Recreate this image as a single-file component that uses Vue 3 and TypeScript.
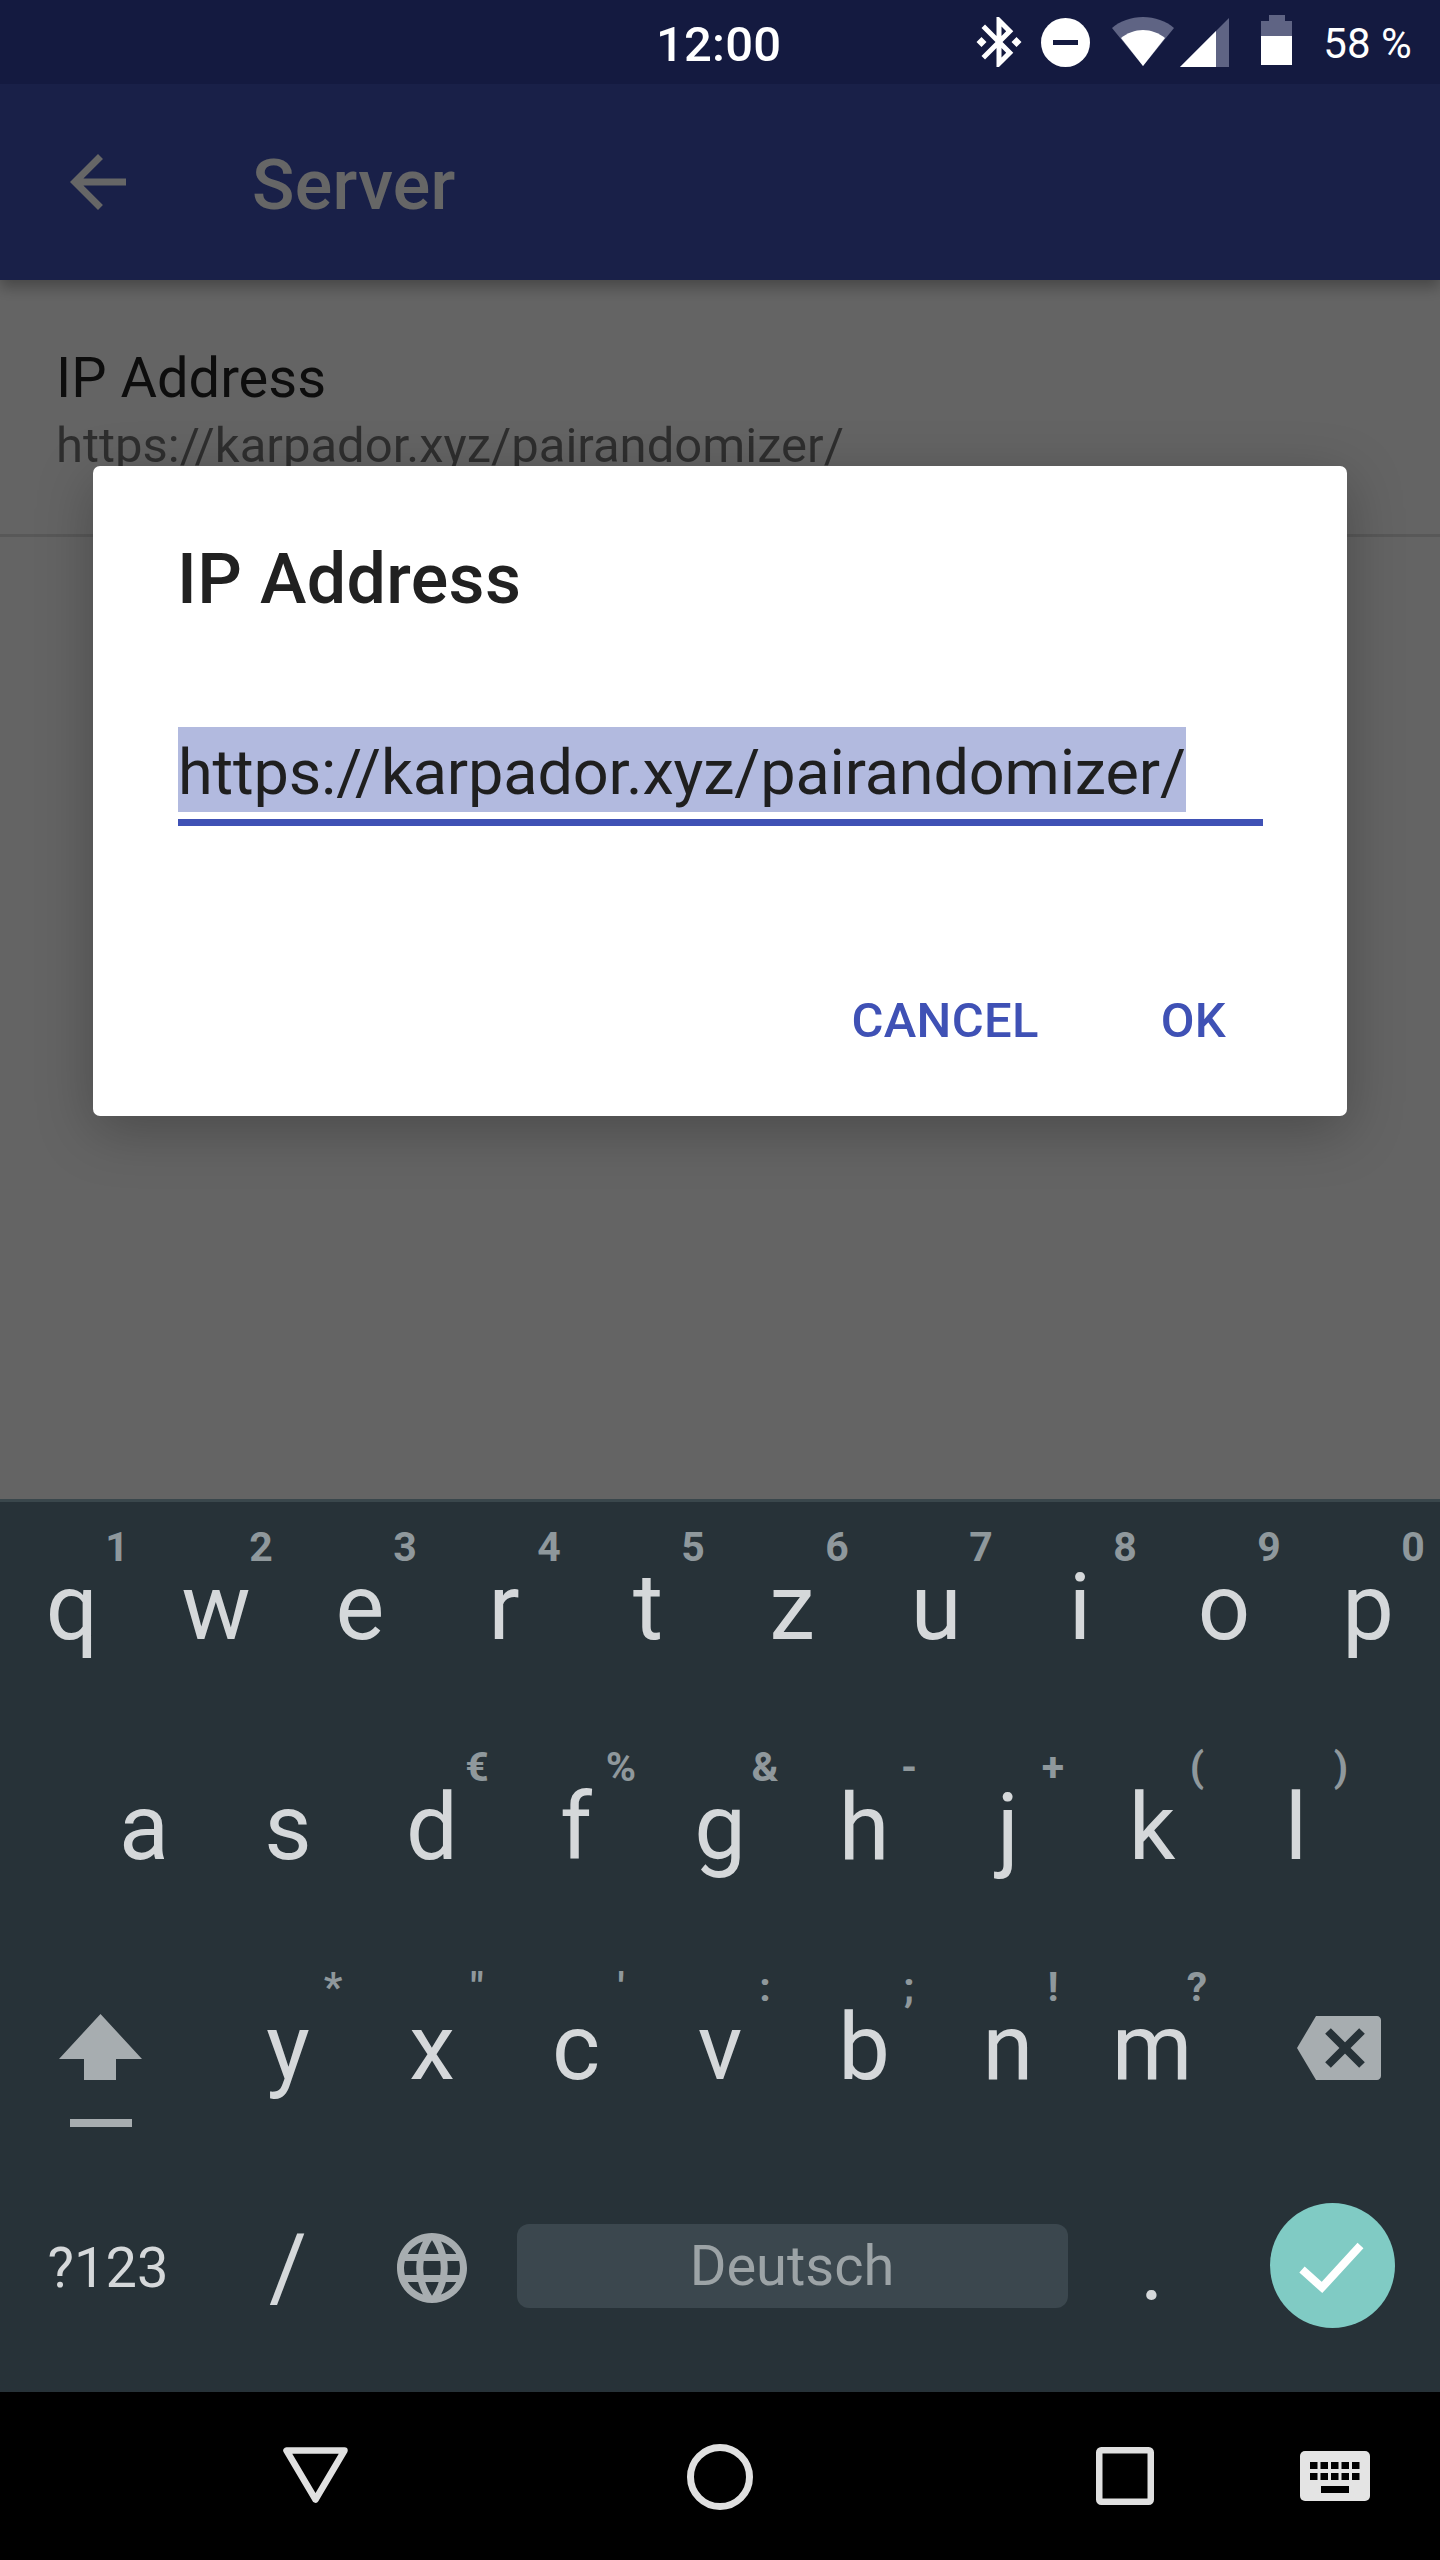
<script setup lang="ts">
interface Key {
  label: string
  hint?: string
}

const toKeys = (labels: string, hints: string): Key[] =>
  labels.split('').map((label, i) => ({ label, hint: hints[i]?.trim() }))

const rowOne = toKeys('qwertzuiop', '1234567890')
const rowTwo = toKeys('asdfghjkl', '  €%&-+()')
const rowThree = toKeys('yxcvbnm', '*"\':;!?')

const keyboardKeys = [0, 1, 2, 3, 4].flatMap((col) => [0, 1].map((row) => ({ col, row })))
</script>

<template>
  <div class="phone">
    <header class="status-bar">
      <span class="clock">12:00</span>
      <div class="status-icons">
        <svg class="ic-bluetooth" viewBox="0 0 24 24" width="60" height="60" fill="#fff">
          <path d="M7 12l-2-2-2 2 2 2 2-2zm10.71-4.29L12 2h-1v7.59L6.41 5 5 6.41 10.59 12 5 17.59 6.41 19 11 14.41V22h1l5.71-5.71-4.3-4.29 4.3-4.29zM13 5.83l1.88 1.88L13 9.59V5.83zm1.88 10.46L13 18.17v-3.76l1.88 1.88zM19 10l-2 2 2 2 2-2-2-2z" />
        </svg>
        <svg class="ic-dnd" viewBox="0 0 49 49" width="49" height="49">
          <circle cx="24.5" cy="24.5" r="24.5" fill="#fff" />
          <rect x="12" y="22" width="25" height="5" fill="#141a40" />
        </svg>
        <svg class="ic-wifi" viewBox="0 0 62 50" width="62" height="50">
          <path d="M0 11C8 4 19 0 31 0s23 4 31 11L31 49z" fill="#5f6484" />
          <path d="M9 21c6-5 14-8 22-8s16 3 22 8L31 49z" fill="#fff" />
        </svg>
        <svg class="ic-signal" viewBox="0 0 49 49" width="49" height="49">
          <path d="M0 49L49 0v49z" fill="#5f6484" />
          <path d="M0 49l36-36v36z" fill="#fff" />
        </svg>
        <svg class="ic-battery" viewBox="0 0 31 50" width="31" height="50">
          <path d="M8 0h16v6h7v15H0V6h8z" fill="#5f6484" />
          <rect y="21" width="31" height="29" fill="#fff" />
        </svg>
        <span class="battery-text">58 %</span>
      </div>
    </header>

    <main class="screen">
      <div class="app-bar">
        <svg class="back" viewBox="0 0 24 24" width="84" height="84" fill="#fff">
          <path d="M20 11H7.83l5.59-5.59L12 4l-8 8 8 8 1.41-1.41L7.83 13H20v-2z" />
        </svg>
        <h1 class="app-title">Server</h1>
      </div>
      <div class="pref-row">
        <div class="pref-title">IP Address</div>
        <div class="pref-summary">https://karpador.xyz/pairandomizer/</div>
      </div>

      <div class="scrim">
        <section class="dialog">
          <h2 class="dialog-title">IP Address</h2>
          <div class="field">
            <span class="selected">https://karpador.xyz/pairandomizer/</span>
          </div>
          <div class="actions">
            <button class="action">CANCEL</button>
            <button class="action">OK</button>
          </div>
        </section>
      </div>
    </main>

    <section class="keyboard">
      <div class="kb-row">
        <div v-for="k in rowOne" :key="k.label" class="key">
          {{ k.label }}<span class="hint">{{ k.hint }}</span>
        </div>
      </div>
      <div class="kb-row kb-row-inset">
        <div v-for="k in rowTwo" :key="k.label" class="key">
          {{ k.label }}<span v-if="k.hint" class="hint">{{ k.hint }}</span>
        </div>
      </div>
      <div class="kb-row">
        <div class="key key-wide key-shift">
          <svg viewBox="0 0 83 114" width="83" height="114" fill="#a7adb0">
            <path d="M41.5 0L83 45H57v21H25V45H0z" />
            <rect x="11" y="105" width="62" height="8" />
          </svg>
        </div>
        <div v-for="k in rowThree" :key="k.label" class="key">
          {{ k.label }}<span class="hint">{{ k.hint }}</span>
        </div>
        <div class="key key-wide key-delete">
          <svg viewBox="0 0 84 64" width="84" height="64">
            <path d="M19 0h61c2 0 4 2 4 4v56c0 2-2 4-4 4H19L0 32z" fill="#a7adb0" />
            <path d="M31 15l34 34M65 15L31 49" stroke="#273238" stroke-width="8" fill="none" />
          </svg>
        </div>
      </div>
      <div class="kb-row">
        <div class="key key-wide key-small">?123</div>
        <div class="key">/</div>
        <div class="key">
          <svg viewBox="0 0 24 24" width="84" height="84" fill="#a7adb0">
            <path d="M11.99 2C6.47 2 2 6.48 2 12s4.47 10 9.99 10C17.52 22 22 17.52 22 12S17.52 2 11.99 2zm6.93 6h-2.95c-.32-1.25-.78-2.45-1.38-3.56 1.84.63 3.37 1.91 4.33 3.56zM12 4.04c.83 1.2 1.48 2.53 1.91 3.96h-3.82c.43-1.43 1.08-2.76 1.91-3.96zM4.26 14C4.1 13.36 4 12.69 4 12s.1-1.36.26-2h3.38c-.08.66-.14 1.32-.14 2 0 .68.06 1.34.14 2H4.26zm.82 2h2.95c.32 1.25.78 2.45 1.38 3.56-1.84-.63-3.37-1.9-4.33-3.56zm2.95-8H5.08c.96-1.66 2.49-2.93 4.33-3.56C8.81 5.55 8.35 6.75 8.03 8zM12 19.96c-.83-1.2-1.48-2.53-1.91-3.96h3.82c-.43 1.43-1.08 2.76-1.91 3.96zM14.34 14H9.66c-.09-.66-.16-1.32-.16-2 0-.68.07-1.35.16-2h4.68c.09.65.16 1.32.16 2 0 .68-.07 1.34-.16 2zm.25 5.56c.6-1.11 1.06-2.31 1.38-3.56h2.95c-.96 1.65-2.49 2.93-4.33 3.56zM16.36 14c.08-.66.14-1.32.14-2 0-.68-.06-1.34-.14-2h3.38c.16.64.26 1.31.26 2s-.1 1.36-.26 2h-3.38z" />
          </svg>
        </div>
        <div class="key key-space"><span class="space-bar">Deutsch</span></div>
        <div class="key">.</div>
        <div class="key key-wide">
          <span class="enter">
            <svg viewBox="0 0 125 125" width="125" height="125" fill="none">
              <path d="M32 66.500l20 18 38.500-42" stroke="#fff" stroke-width="8" />
            </svg>
          </span>
        </div>
      </div>
    </section>

    <nav class="nav-bar">
      <svg class="nav-back" viewBox="0 0 65 56" width="65" height="56" fill="none" stroke="#e0e0e0" stroke-width="6.5" stroke-linejoin="round">
        <path d="M3.5 3.5h58L32.5 52.500z" />
      </svg>
      <svg class="nav-home" viewBox="0 0 66 66" width="66" height="66" fill="none" stroke="#e0e0e0" stroke-width="7">
        <circle cx="33" cy="33" r="29.500" />
      </svg>
      <svg class="nav-recent" viewBox="0 0 58 58" width="58" height="58" fill="none" stroke="#e0e0e0" stroke-width="6.500">
        <rect x="3.250" y="3.250" width="51.500" height="51.500" rx="2" />
      </svg>
      <svg class="nav-ime" viewBox="0 0 70 50" width="70" height="50">
        <rect width="70" height="50" rx="5" fill="#e4e4e4" />
        <rect
          v-for="k in keyboardKeys"
          :key="`${k.col}-${k.row}`"
          :x="10 + k.col * 10.500"
          :y="11 + k.row * 11"
          width="7.500"
          height="7"
          fill="#000"
        />
        <rect x="21" y="35" width="28" height="7" fill="#000" />
      </svg>
    </nav>
  </div>
</template>

<style scoped>
.phone {
  width: 1440px;
  height: 2560px;
  display: flex;
  flex-direction: column;
  overflow: hidden;
  font-family: Roboto, "Liberation Sans", sans-serif;
}

/* status bar */
.status-bar {
  height: 84px;
  flex-shrink: 0;
  background: #141a40;
  color: #fff;
  display: flex;
  align-items: center;
  position: relative;
}

.clock {
  margin-left: 656px;
  padding-top: 5px;
  font-size: 49px;
  font-weight: 500;
  line-height: 84px;
  letter-spacing: 0.2px;
}

.status-icons {
  display: flex;
  align-items: center;
  margin-left: 188px;
}

.ic-bluetooth {
  flex-shrink: 0;
}

.ic-dnd {
  flex-shrink: 0;
  margin-left: 12px;
}

.ic-wifi {
  flex-shrink: 0;
  margin-left: 22px;
}

.ic-signal {
  flex-shrink: 0;
  margin-left: 6px;
}

.ic-battery {
  flex-shrink: 0;
  margin-left: 32px;
  margin-top: -4px;
}

.battery-text {
  margin-left: 31px;
  padding-top: 3px;
  font-size: 42px;
  line-height: 84px;
  white-space: nowrap;
}

/* app behind the dialog */
.screen {
  flex: 1;
  position: relative;
  background: #fafafa;
  overflow: hidden;
}

.app-bar {
  height: 196px;
  background: #3f51b5;
  display: flex;
  align-items: center;
  padding-left: 56px;
  box-shadow: 0 7px 14px rgba(0, 0, 0, 0.3);
  position: relative;
}

.app-title {
  margin: 6px 0 0 112px;
  font-size: 70px;
  font-weight: 500;
  color: #fff;
  letter-spacing: 0.3px;
}

.pref-row {
  height: 257px;
  box-sizing: border-box;
  padding: 63px 56px 0;
  border-bottom: 3px solid #dcdcdc;
}

.pref-title {
  font-size: 56px;
  line-height: 70px;
  color: rgba(0, 0, 0, 0.87);
}

.pref-summary {
  font-size: 49px;
  line-height: 66px;
  color: rgba(0, 0, 0, 0.54);
  white-space: nowrap;
}

.scrim {
  position: absolute;
  inset: 0;
  box-sizing: border-box;
  padding-bottom: 1px;
  background: rgba(0, 0, 0, 0.6);
  display: flex;
  align-items: center;
  justify-content: center;
}

.dialog {
  width: 1254px;
  height: 650px;
  box-sizing: border-box;
  background: #fff;
  border-radius: 7px;
  padding: 0 84px 0 85px;
  box-shadow: 0 14px 56px rgba(0, 0, 0, 0.26);
  display: flex;
  flex-direction: column;
}

.dialog-title {
  margin: 71px 0 0 -1px;
  font-size: 70px;
  line-height: 84px;
  font-weight: 500;
  color: #212121;
  letter-spacing: 0.35px;
}

.field {
  margin-top: 106px;
  height: 99px;
  box-sizing: border-box;
  border-bottom: 7px solid #3f51b5;
  display: flex;
  align-items: flex-start;
  color: #1f1f1f;
  font-size: 63px;
  letter-spacing: -0.15px;
  white-space: nowrap;
}

.selected {
  height: 85px;
  line-height: 91px;
  background: #b2badf;
}

.actions {
  margin-top: auto;
  margin-bottom: 65px;
  display: flex;
  justify-content: flex-end;
  gap: 122px;
  padding-right: 37px;
}

.action {
  border: none;
  background: none;
  padding: 0;
  font-family: inherit;
  font-size: 49px;
  line-height: 60px;
  font-weight: 500;
  color: #3f51b5;
  letter-spacing: 0.3px;
}

/* keyboard */
.keyboard {
  height: 893px;
  flex-shrink: 0;
  box-sizing: border-box;
  background: #273238;
  border-top: 3px solid #3a474c;
  display: flex;
  flex-direction: column;
  gap: 8px;
  color: #d5d8da;
}

.kb-row {
  height: 212px;
  display: flex;
}

.kb-row-inset {
  padding-left: 72px;
}

.key {
  width: 144px;
  height: 212px;
  flex-shrink: 0;
  position: relative;
  display: flex;
  align-items: center;
  justify-content: center;
  font-size: 92px;
  line-height: 212px;
}

.key-wide {
  width: 216px;
}

.key-shift {
  padding-right: 15px;
  padding-top: 46px;
  box-sizing: border-box;
}

.key-delete {
  padding-left: 14px;
  box-sizing: border-box;
}

.key-small {
  font-size: 56px;
}

.key-space {
  width: 576px;
}

.space-bar {
  width: 551px;
  height: 84px;
  margin-top: -4px;
  border-radius: 12px;
  background: #3b474e;
  color: #9ca3a6;
  font-size: 56px;
  line-height: 84px;
  text-align: center;
}

.enter {
  width: 125px;
  height: 125px;
  margin-top: -6px;
  border-radius: 50%;
  background: #80cbc4;
  display: flex;
}

.hint {
  position: absolute;
  top: 25px;
  left: calc(50% + 45px);
  transform: translateX(-50%);
  font-size: 41px;
  line-height: 41px;
  font-weight: 700;
  color: #8f989c;
}

/* navigation bar */
.nav-bar {
  height: 168px;
  flex-shrink: 0;
  background: #000;
  position: relative;
}

.nav-bar svg {
  position: absolute;
}

.nav-back {
  left: 283px;
  top: 55px;
}

.nav-home {
  left: 687px;
  top: 52px;
}

.nav-recent {
  left: 1096px;
  top: 55px;
}

.nav-ime {
  left: 1300px;
  top: 59px;
}
</style>

<style>
html,
body {
  margin: 0;
  background: #000;
}
</style>
